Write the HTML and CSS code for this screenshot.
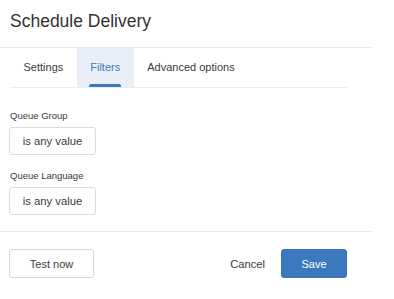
FILE: index.html
```html
<!DOCTYPE html>
<html>
<head>
<meta charset="utf-8">
<link rel="stylesheet" href="styles.css">
</head>
<body>
<div class="dialog">
  <div class="header">
    <h1 class="title">Schedule Delivery</h1>
  </div>
  <div class="tabs">
    <div class="tab">Settings</div>
    <div class="tab active">Filters</div>
    <div class="tab">Advanced options</div>
  </div>
  <div class="content">
    <div class="field">
      <div class="label">Queue Group</div>
      <button class="filter-btn">is any value</button>
    </div>
    <div class="field">
      <div class="label">Queue Language</div>
      <button class="filter-btn">is any value</button>
    </div>
  </div>
  <div class="footer">
    <button class="btn btn-default">Test now</button>
    <div class="footer-right">
      <button class="btn btn-link">Cancel</button>
      <button class="btn btn-primary">Save</button>
    </div>
  </div>
</div>
</body>
</html>
```

FILE: styles.css
```css
* { box-sizing: border-box; }
html, body {
  margin: 0;
  padding: 0;
  background: #fff;
  font-family: "Liberation Sans", Arial, sans-serif;
  color: #333;
}
.dialog {
  width: 372px;
}
.header {
  height: 48px;
  padding: 11px 0 0 10px;
  border-bottom: 1px solid #e8e8e8;
}
.title {
  margin: 0;
  font-size: 17.5px;
  line-height: 20px;
  font-weight: normal;
  color: #333;
}
.tabs {
  display: flex;
  margin-left: 10px;
  width: 337px;
  height: 40px;
  border-bottom: 1px solid #ececec;
}
.tab {
  position: relative;
  padding: 0 13.5px;
  font-size: 11px;
  line-height: 39px;
  color: #3a3a3a;
}
.tab.active {
  background: #e9eff8;
  color: #3b78c0;
}
.tab.active::after {
  content: "";
  position: absolute;
  left: 12.5px;
  right: 12.5px;
  bottom: 0;
  height: 3px;
  border-radius: 2px 2px 0 0;
  background: #3b78c0;
}
.content {
  padding: 22px 0 0 9px;
  height: 144px;
  border-bottom: 1px solid #e8e8e8;
}
.field {
  display: flex;
  flex-direction: column;
  align-items: flex-start;
  margin-bottom: 15px;
}
.label {
  font-size: 9.5px;
  line-height: 12px;
  margin: 0 0 5px 1px;
  color: #3a3a3a;
}
.filter-btn {
  width: 87px;
  height: 28px;
  padding: 0;
  border: 1px solid #dcdcdc;
  border-radius: 3px;
  background: #fff;
  font-family: "Liberation Sans", Arial, sans-serif;
  font-size: 11.3px;
  color: #3a3a3a;
}
.footer {
  display: flex;
  justify-content: space-between;
  align-items: center;
  padding: 17px 25px 0 9px;
}
.footer-right {
  display: flex;
  align-items: center;
  gap: 10px;
}
.btn {
  height: 29px;
  border-radius: 3px;
  font-family: "Liberation Sans", Arial, sans-serif;
  font-size: 11px;
  padding: 0;
}
.btn-default {
  width: 85px;
  background: #fff;
  border: 1px solid #d6d6d6;
  color: #3a3a3a;
}
.btn-link {
  background: none;
  border: none;
  color: #3a3a3a;
  padding: 0 6px;
  font-size: 11.2px;
}
.btn-primary {
  width: 66px;
  background: #3b78bd;
  border: 1px solid #3873b6;
  color: #fff;
}
```
